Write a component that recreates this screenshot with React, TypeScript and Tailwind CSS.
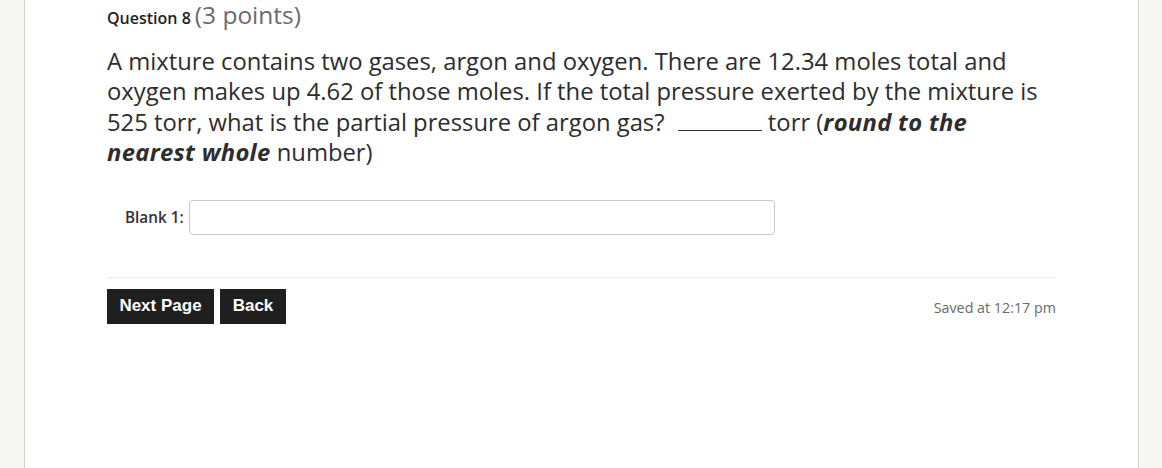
import React from "react";

export default function App() {
  return (
    <div className="flex h-[468px] w-[1162px] overflow-hidden bg-[#f7f7f6]" style={{ fontFamily: '"Open Sans", sans-serif' }}>
      <div className="w-[24px] shrink-0" />
      <div className="w-[1px] shrink-0 bg-[#d0d0d0]" />
      <div className="flex-1 bg-white px-[82px] pr-[82px]">
        <div className="flex items-baseline gap-[4px] leading-[30px] text-[#222]">
          <span className="text-[16px] font-semibold">Question 8</span>
          <span className="text-[24.5px] text-[#6b6b6b]">(3 points)</span>
        </div>
        <p className="mt-[12.5px] max-w-[935px] text-[23.8px] leading-[30.5px] text-[#2d2d2d]">
          A mixture contains two gases, argon and oxygen. There are 12.34 moles total and oxygen makes up 4.62 of those moles. If the total pressure exerted by the mixture is 525 torr, what is the partial pressure of argon gas?{" "}
          <span className="ml-[7px] inline-block h-[1px] w-[84px] bg-[#333] align-baseline" /> torr (
          <b className="italic tracking-[0.3px]">round to the nearest whole</b> number)
        </p>
        <div className="mt-[32px] flex items-center pl-[18px]">
          <span className="mr-[5px] text-[15.3px] font-semibold text-[#333]">Blank 1:</span>
          <input className="h-[35px] w-[586px] rounded-[4px] border border-[#c8c8c8] bg-white" />
        </div>
        <div className="mt-[42px] h-[1px] bg-[#ececec]" />
        <div className="mt-[11px] flex items-center justify-between">
          <div className="flex gap-[6px]" style={{ fontFamily: '"Liberation Sans", Arial, sans-serif' }}>
            <button className="h-[35px] w-[107px] bg-[#1f1f1f] text-[17px] font-bold text-white">Next Page</button>
            <button className="h-[35px] w-[66px] bg-[#1f1f1f] text-[17px] font-bold text-white">Back</button>
          </div>
          <span className="mt-[3px] text-[14.3px] text-[#6a6a6a]">Saved at 12:17 pm</span>
        </div>
      </div>
      <div className="w-[1px] shrink-0 bg-[#d0d0d0]" />
      <div className="w-[23px] shrink-0" />
    </div>
  );
}
